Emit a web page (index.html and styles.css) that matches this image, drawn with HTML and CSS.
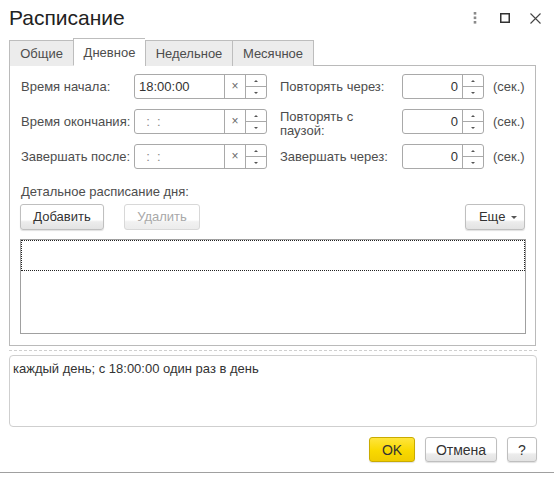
FILE: index.html
```html
<!DOCTYPE html>
<html lang="ru">
<head>
<meta charset="utf-8">
<title>Расписание</title>
<link rel="stylesheet" href="styles.css">
</head>
<body>
<div class="window">
  <div class="titlebar">
    <div class="title">Расписание</div>
    <div class="wbtns">
      <span class="wbtn"><svg width="4" height="12" viewBox="0 0 4 12"><rect x="0.7" y="0" width="2.6" height="2.6" fill="#8a8a8a"/><rect x="0.7" y="4.5" width="2.6" height="2.6" fill="#8a8a8a"/><rect x="0.7" y="9" width="2.6" height="2.6" fill="#8a8a8a"/></svg></span>
      <span class="wbtn"><svg width="10" height="10" viewBox="0 0 10 10"><rect x="0.75" y="0.75" width="8.5" height="8.5" fill="none" stroke="#333" stroke-width="1.5"/></svg></span>
      <span class="wbtn"><svg width="11" height="11" viewBox="0 0 11 11"><path d="M0.5 0.5 L10.5 10.5 M10.5 0.5 L0.5 10.5" stroke="#444" stroke-width="1.1" fill="none"/></svg></span>
    </div>
  </div>

  <div class="tabs">
    <div class="tab t1">Общие</div>
    <div class="tab t2 active">Дневное</div>
    <div class="tab t3">Недельное</div>
    <div class="tab t4">Месячное</div>
  </div>

  <div class="panel">
    <div class="fields">
      <div class="lbl">Время начала:</div>
      <div class="tinput">
        <div class="tval">18:00:00</div>
        <div class="tclear">×</div>
        <div class="spin"><span class="up"></span><span class="dn"></span></div>
      </div>
      <div></div>
      <div class="lbl">Повторять через:</div>
      <div class="ninput">
        <div class="nval">0</div>
        <div class="spin"><span class="up"></span><span class="dn"></span></div>
      </div>
      <div class="unit">(сек.)</div>

      <div class="lbl">Время окончания:</div>
      <div class="tinput">
        <div class="tval empty">  :  :  </div>
        <div class="tclear">×</div>
        <div class="spin"><span class="up"></span><span class="dn"></span></div>
      </div>
      <div></div>
      <div class="lbl two">Повторять с<br>паузой:</div>
      <div class="ninput">
        <div class="nval">0</div>
        <div class="spin"><span class="up"></span><span class="dn"></span></div>
      </div>
      <div class="unit">(сек.)</div>

      <div class="lbl">Завершать после:</div>
      <div class="tinput">
        <div class="tval empty">  :  :  </div>
        <div class="tclear">×</div>
        <div class="spin"><span class="up"></span><span class="dn"></span></div>
      </div>
      <div></div>
      <div class="lbl">Завершать через:</div>
      <div class="ninput">
        <div class="nval">0</div>
        <div class="spin"><span class="up"></span><span class="dn"></span></div>
      </div>
      <div class="unit">(сек.)</div>
    </div>

    <div class="detail-label">Детальное расписание дня:</div>
    <div class="toolbar">
      <button class="btn add">Добавить</button>
      <button class="btn del" disabled>Удалить</button>
      <span class="spacer"></span>
      <button class="btn more">Еще <span class="caret"></span></button>
    </div>
    <div class="table">
      <div class="row focus"></div>
    </div>
  </div>

  <div class="dash"></div>
  <div class="summary">каждый день; с 18:00:00 один раз в день</div>

  <div class="footer">
    <button class="btn ok">OK</button>
    <button class="btn cancel">Отмена</button>
    <button class="btn help">?</button>
  </div>
  <div class="bottomline"></div>
</div>
</body>
</html>
```

FILE: styles.css
```css
* { box-sizing: border-box; }
html, body { margin: 0; padding: 0; background: #fff; }
body {
  font-family: "Liberation Sans", Arial, sans-serif;
  font-size: 13px;
  color: #4d4d4d;
}
.window {
  width: 554px;
  height: 478px;
  padding: 0 0 0 9px;
  overflow: hidden;
}
.titlebar {
  height: 39px;
  display: flex;
  align-items: flex-start;
}
.title {
  padding-top: 6px;
  font-size: 21px;
  line-height: 24px;
  color: #222;
  flex: 1;
}
.wbtns {
  display: flex;
  padding-top: 12px;
  padding-right: 4px;
}
.wbtn {
  width: 30px;
  height: 12px;
  display: flex;
  align-items: center;
  justify-content: center;
}

.tabs {
  display: flex;
  height: 27px;
  align-items: flex-end;
  position: relative;
  z-index: 2;
  margin-bottom: -1px;
}
.tab {
  height: 26px;
  background: #ececec;
  border: 1px solid #bdbdbd;
  border-bottom: none;
  border-right: none;
  display: flex;
  align-items: center;
  justify-content: center;
  line-height: 16px;
  color: #4d4d4d;
}
.tab.t4 { border-right: 1px solid #bdbdbd; }
.t1 { width: 64px; }
.t2 { width: 72px; }
.t3 { width: 87px; }
.t4 { width: 82px; }
.tab.active {
  background: #fff;
  height: 28px;
  border-bottom: 1px solid #fff;
  padding-top: 1px;
}

.panel {
  width: 527px;
  height: 281px;
  border: 1px solid #bababa;
  padding: 8px 9px 0 10px;
}
.fields {
  display: grid;
  grid-template-columns: 114px 133px 12px 123px 82px auto;
  grid-auto-rows: 25px;
  row-gap: 10px;
  align-items: center;
}
.lbl {
  padding-left: 1px;
  line-height: 16px;
  white-space: nowrap;
}
.lbl.two {
  align-self: start;
  line-height: 14px;
  margin-top: 1px;
}
.unit { padding-left: 9px; }

.tinput, .ninput {
  height: 25px;
  border: 1px solid #a9a9a9;
  border-radius: 3px;
  display: flex;
  background: #fff;
}
.tval {
  flex: 1;
  padding-left: 4px;
  line-height: 23px;
  color: #333;
  white-space: pre;
}
.tval.empty { color: #888; }
.tclear {
  width: 21px;
  border-left: 1px solid #a9a9a9;
  text-align: center;
  line-height: 22px;
  font-size: 12px;
  color: #6a6a6a;
}
.spin {
  width: 21px;
  border-left: 1px solid #a9a9a9;
  display: flex;
  flex-direction: column;
}
.spin span {
  flex: 1;
  display: flex;
  align-items: center;
  justify-content: center;
}
.spin .up { border-bottom: 1px solid #a9a9a9; }
.spin .up::before {
  content: "";
  border-left: 2px solid transparent;
  border-right: 2px solid transparent;
  border-bottom: 2px solid #555;
}
.spin .dn::before {
  content: "";
  border-left: 2px solid transparent;
  border-right: 2px solid transparent;
  border-top: 2px solid #555;
}
.nval {
  flex: 1;
  text-align: right;
  padding-right: 4px;
  line-height: 23px;
  color: #333;
}

.detail-label {
  margin-top: 15px;
  line-height: 16px;
  padding-left: 1px;
}
.toolbar {
  margin-top: 4px;
  display: flex;
  height: 26px;
}
.spacer { flex: 1; }

.btn {
  font-family: "Liberation Sans", Arial, sans-serif;
  font-size: 13px;
  color: #333;
  border: 1px solid #bfbfbf;
  border-radius: 3px;
  background: linear-gradient(#ffffff 0%, #ffffff 62%, #ececec 70%, #e3e3e3 100%);
  box-shadow: 0 1px 1px rgba(0,0,0,0.12);
  padding: 0;
  margin: 0;
  height: 26px;
  line-height: 22px;
}
.add { width: 84px; }
.del {
  width: 76px;
  margin-left: 20px;
  color: #a8a8a8;
  border-color: #d8d8d8;
  box-shadow: none;
  background: linear-gradient(#ffffff 0%, #ffffff 62%, #f1f1f1 70%, #ececec 100%);
}
.more {
  width: 60px;
  margin-right: 1px;
  text-align: right;
  padding-right: 7px;
}
.caret {
  display: inline-block;
  vertical-align: middle;
  margin-left: 2px;
  border-left: 3px solid transparent;
  border-right: 3px solid transparent;
  border-top: 3px solid #555;
}
.table {
  margin-top: 9px;
  height: 95px;
  border: 1px solid #a0a0a0;
}
.row.focus {
  height: 31px;
  border: 1px dotted #222;
}

.dash {
  width: 528px;
  margin-top: 4px;
  border-top: 1px dashed #cfcfcf;
}
.summary {
  width: 528px;
  height: 72px;
  margin-top: 4px;
  border: 1px solid #cfcfcf;
  border-radius: 4px;
  padding: 5px 3px;
  line-height: 16px;
  color: #333;
}
.footer {
  width: 528px;
  margin-top: 10px;
  display: flex;
  justify-content: flex-end;
  gap: 10px;
}
.footer .btn { height: 25px; line-height: 22px; }
.ok {
  width: 46px;
  font-size: 14px;
  background: linear-gradient(#ffe53d 0%, #f9d900 55%, #f0cc00 100%);
  border-color: #c9ab00;
}
.cancel { width: 72px; font-size: 14px; }
.help { width: 30px; font-size: 14px; }
.bottomline {
  margin-top: 10px;
  margin-left: -9px;
  width: 554px;
  border-top: 1px solid #a0a0a0;
}
```
